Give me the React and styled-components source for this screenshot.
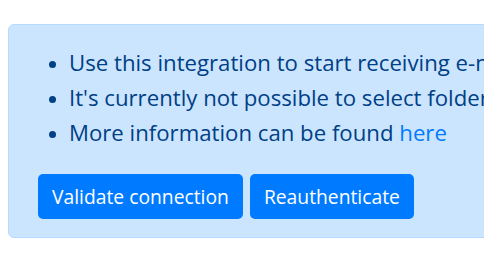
import styled, { createGlobalStyle } from 'styled-components'

const GlobalStyle = createGlobalStyle`
    html, body {
        margin: 0;
        padding: 0;
        background: #fff;
        overflow: hidden;
    }
    body {
        font-family: "Open Sans", "Noto Sans", sans-serif;
    }
`

const Page = styled.div`
    width: 484px;
    height: 253px;
    padding: 24px 0 0 8px;
    box-sizing: border-box;
    overflow: hidden;
`

const Alert = styled.div`
    width: 540px;
    box-sizing: border-box;
    background: #cce5ff;
    border: 1px solid #b8daff;
    border-radius: 6px;
    color: #004085;
    padding: 20px 29px 18px 29px;
`

const List = styled.ul`
    margin: 0 0 24px 0;
    padding-left: 31px;
    font-size: 22.2px;
    line-height: 35px;
    white-space: nowrap;
    li::marker {
        font-size: 19px;
    }
`

const Link = styled.a`
    color: #007bff;
    text-decoration: none;
`

const Actions = styled.div`
    display: flex;
    gap: 7px;
`

const Button = styled.button`
    height: 45px;
    padding: 0 14px;
    border: none;
    border-radius: 5px;
    background: #007bff;
    color: #fff;
    font-family: inherit;
    font-size: 19.3px;
    cursor: pointer;
`

const App = () => {
    return (
        <>
            <GlobalStyle />
            <Page>
                <Alert>
                    <List>
                        <li>Use this integration to start receiving e-mails</li>
                        <li>It's currently not possible to select folders</li>
                        <li>More information can be found <Link href="#">here</Link></li>
                    </List>
                    <Actions>
                        <Button>Validate connection</Button>
                        <Button>Reauthenticate</Button>
                    </Actions>
                </Alert>
            </Page>
        </>
    )
}

export default App
